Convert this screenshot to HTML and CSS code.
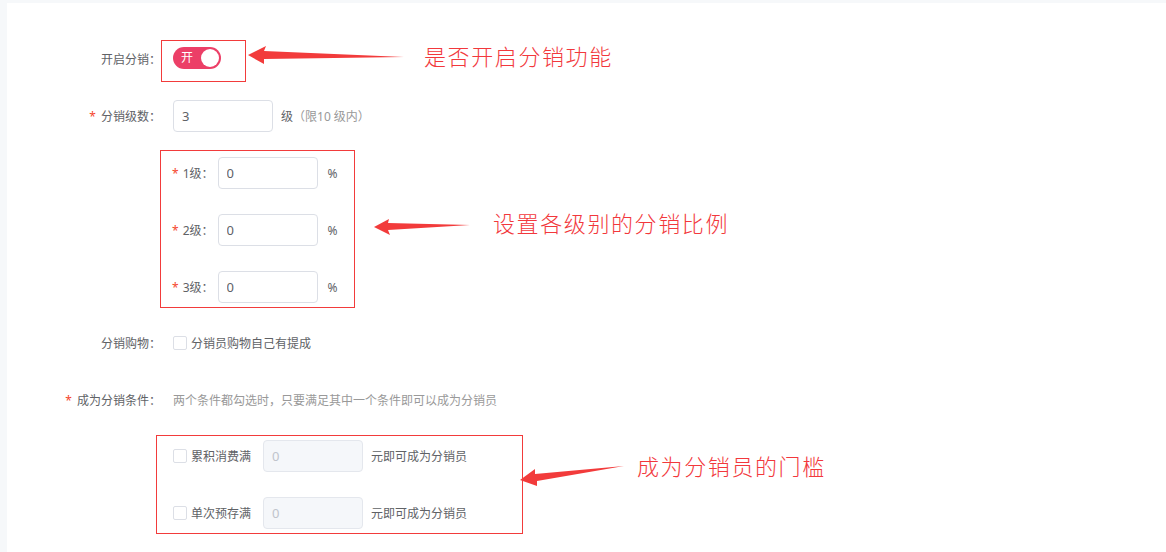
FILE: index.html
```html
<!DOCTYPE html>
<html lang="zh-CN">
<head>
<meta charset="utf-8">
<title>分销设置</title>
<link rel="stylesheet" href="styles.css">
</head>
<body>
<div class="page">
  <div class="card">
    <form class="form">
      <div class="row">
        <label class="label">开启分销：</label>
        <div class="mark mark-switch">
          <span class="switch"><span class="switch-text">开</span><span class="knob"></span></span>
        </div>
      </div>

      <div class="row">
        <label class="label"><i class="req">*</i>分销级数：</label>
        <input class="input" type="text" value="3">
        <span class="unit">级</span><span class="tip">（限10 级内）</span>
      </div>

      <div class="mark mark-levels">
        <div class="row">
          <label class="sublabel"><i class="req">*</i>1级：</label>
          <input class="input" type="text" value="0">
          <span class="pct">%</span>
        </div>
        <div class="row">
          <label class="sublabel"><i class="req">*</i>2级：</label>
          <input class="input" type="text" value="0">
          <span class="pct">%</span>
        </div>
        <div class="row">
          <label class="sublabel"><i class="req">*</i>3级：</label>
          <input class="input" type="text" value="0">
          <span class="pct">%</span>
        </div>
      </div>

      <div class="row">
        <label class="label">分销购物：</label>
        <span class="checkbox"></span>
        <span class="check-text">分销员购物自己有提成</span>
      </div>

      <div class="row">
        <label class="label"><i class="req">*</i>成为分销条件：</label>
        <span class="hint">两个条件都勾选时，只要满足其中一个条件即可以成为分销员</span>
      </div>

      <div class="mark mark-cond">
        <div class="row">
          <span class="checkbox"></span>
          <span class="check-text">累积消费满</span>
          <input class="input input-disabled" type="text" value="0" disabled>
          <span class="after">元即可成为分销员</span>
        </div>
        <div class="row">
          <span class="checkbox"></span>
          <span class="check-text">单次预存满</span>
          <input class="input input-disabled" type="text" value="0" disabled>
          <span class="after">元即可成为分销员</span>
        </div>
      </div>
    </form>
  </div>

  <svg class="arrows" width="1166" height="552" viewBox="0 0 1166 552">
    <polygon points="248,55 266,46 264,51 404,57 264,59 264,64" />
    <polygon points="374,227 389,219 388,223 470,225 388,230 390,235" />
    <polygon points="520,480 535,469 535,474 624,466 537,481 537,486" />
  </svg>
  <span class="note note-1">是否开启分销功能</span>
  <span class="note note-2">设置各级别的分销比例</span>
  <span class="note note-3">成为分销员的门槛</span>
</div>
</body>
</html>
```

FILE: styles.css
```css
* {
  box-sizing: border-box;
}

html,
body {
  margin: 0;
  padding: 0;
  background: #f6f8fa;
  overflow: hidden;
}

body {
  font-family: "Noto Sans", "Noto Sans CJK SC", sans-serif;
  font-size: 12px;
  color: #606266;
}

.page {
  position: relative;
  width: 1166px;
  height: 552px;
  padding: 3px 0 0 7px;
}

.card {
  background: #fff;
  height: 549px;
  padding-top: 40px;
}

.form {
  display: flex;
  flex-direction: column;
  gap: 25px;
}

.row {
  display: flex;
  align-items: center;
  height: 32px;
}

.label {
  width: 166px;
  padding-right: 12px;
  text-align: right;
  flex-shrink: 0;
}

.req {
  font-style: normal;
  color: #f5462d;
  margin-right: 5px;
}

/* annotation frames around control groups */
.mark {
  border: 1px solid #f23b3b;
}

.mark-switch {
  align-self: flex-start;
  margin: -3px 0 0 -12px;
  width: 85px;
  height: 42px;
  padding: 6px 0 0 11px;
}

.switch {
  position: relative;
  display: block;
  width: 48px;
  height: 22px;
  border-radius: 11px;
  background: #ec3f67;
}

.switch-text {
  position: absolute;
  left: 8px;
  top: 0;
  line-height: 22px;
  font-size: 12px;
  color: #fff;
}

.knob {
  position: absolute;
  right: 2px;
  top: 2px;
  width: 18px;
  height: 18px;
  border-radius: 50%;
  background: #fff;
}

.input {
  width: 100px;
  height: 32px;
  border: 1px solid #dcdfe6;
  border-radius: 4px;
  padding: 0 8px;
  font-family: inherit;
  font-size: 13px;
  color: #606266;
  background: #fff;
  outline: none;
}

.input-disabled {
  background: #f5f7fa;
  border-color: #e4e7ed;
  color: #c0c4cc;
}

.unit {
  margin-left: 8px;
}

.tip {
  color: #999;
}

.mark-levels {
  margin: -7px 0 -6px 153px;
  width: 195px;
  padding: 6px 0 4px 11px;
  display: flex;
  flex-direction: column;
  gap: 25px;
}

.sublabel {
  margin-right: 4px;
}

.sublabel .req {
  margin-right: 4px;
}

.pct {
  margin-left: 10px;
}

.checkbox {
  display: inline-block;
  width: 14px;
  height: 14px;
  border: 1px solid #dcdfe6;
  border-radius: 2px;
  background: #fff;
  flex-shrink: 0;
}

.check-text {
  margin-left: 4px;
}

.hint {
  color: #999;
}

.mark-cond {
  margin: -6px 0 0 149px;
  width: 367px;
  padding: 4px 0 4px 16px;
  display: flex;
  flex-direction: column;
  gap: 25px;
}

.mark-cond .input {
  margin-left: 12px;
}

.after {
  margin-left: 8px;
}

/* callouts drawn over the form */
.arrows {
  position: absolute;
  left: 0;
  top: 0;
}

.arrows polygon {
  fill: #f23b3b;
}

.note {
  position: absolute;
  font-family: "Noto Sans CJK SC", sans-serif;
  font-size: 22px;
  font-weight: 300;
  line-height: 22px;
  letter-spacing: 1.6px;
  color: #f2383c;
  white-space: nowrap;
}

.note-1 {
  left: 424px;
  top: 44px;
}

.note-2 {
  left: 493px;
  top: 211px;
}

.note-3 {
  left: 637px;
  top: 454px;
}
```
